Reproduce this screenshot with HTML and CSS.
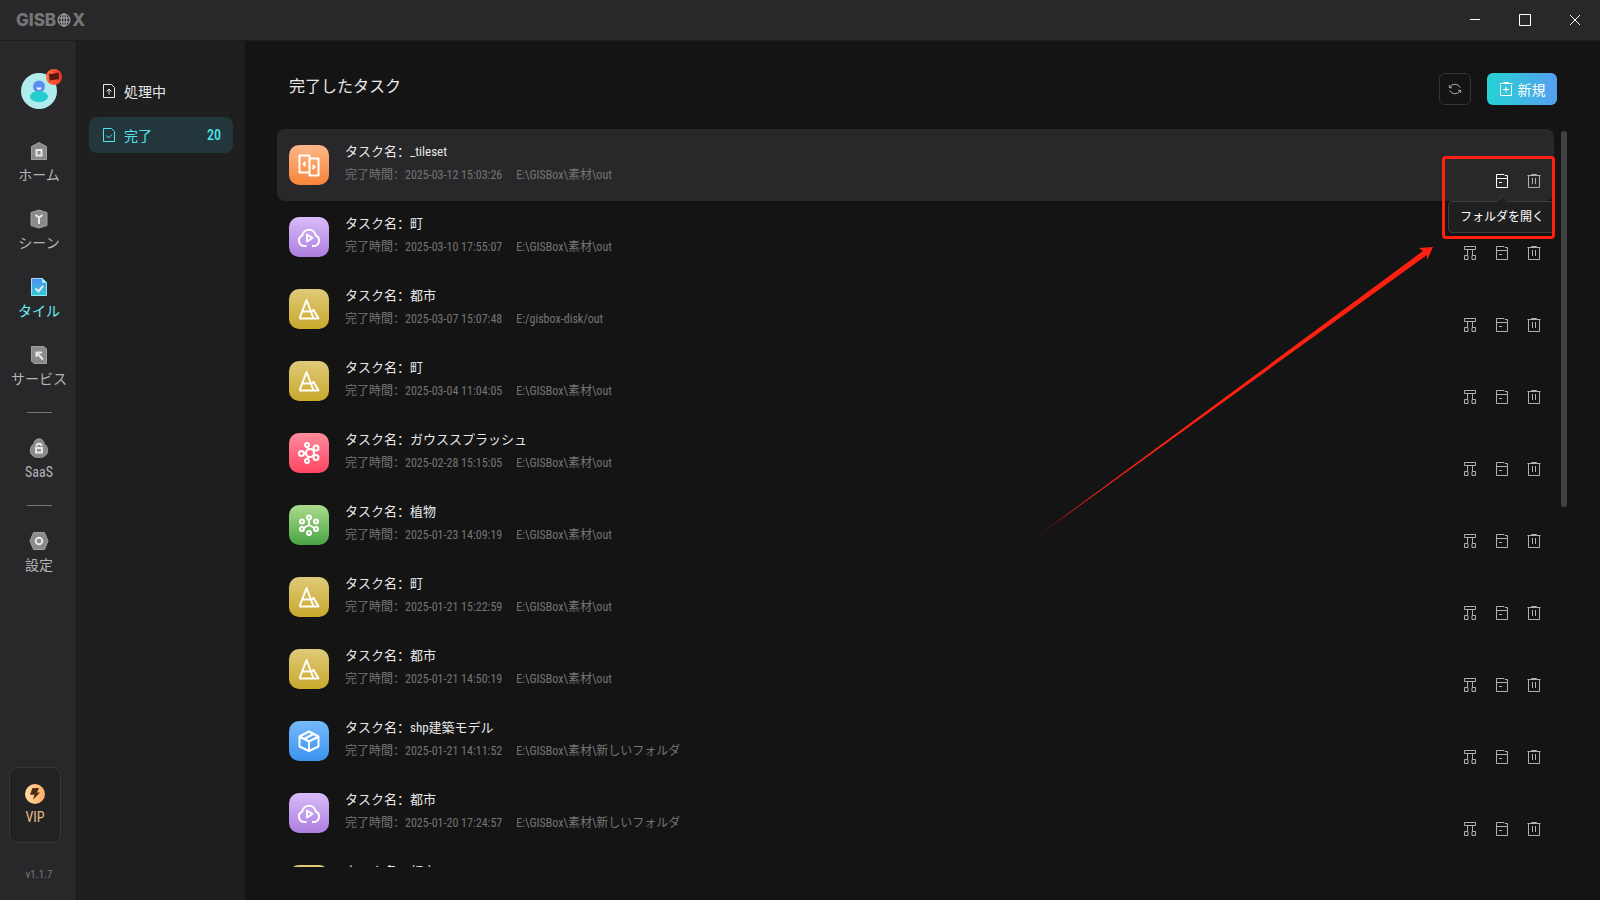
FILE: index.html
```
<!DOCTYPE html>
<html lang="zh-CN">
<head>
    <meta charset="UTF-8">
    <meta name="viewport" content="width=device-width, initial-scale=1.0">
    <title>GISBox - 完了したタスク</title>
    <link rel="stylesheet" href="styles.css">
</head>
<body>
    <!-- アイコン定義 -->
    <svg class="sprite" aria-hidden="true">
        <symbol id="i-tree" viewBox="0 0 14 16"><path d="M1.5 1.5h11v3h-11zM4.5 5v5M9.5 5v5M1.5 10.500h3.500v4h-3.500zM9 10.500h3.500v4h-3.500z"/></symbol>
        <symbol id="i-folder" viewBox="0 0 14 16"><path d="M1.500 14.500v-13h7.500l1 1h2.500v12zM1.500 5.500h11M4 9.500h3"/></symbol>
        <symbol id="i-trash" viewBox="0 0 14 16"><path d="M.5 2.500h13M4 2.500l.5-1h5l.5 1M1.500 3v11.500h11V3M5.500 5v6M8.500 5v6"/></symbol>
        <symbol id="i-tileset" viewBox="0 0 24 24"><path d="M2.500 2.500h10v17h-10zM12.500 5.500h9v17h-9zM8.500 9L6.500 11l2 2M15.500 12l2 2-2 2"/></symbol>
        <symbol id="i-cloud" viewBox="0 0 24 24"><path d="M9.500 21H7a5.500 5.500 0 0 1-1.800-10.500 6.900 6.900 0 0 1 13.600 0A5.500 5.500 0 0 1 17 21h-2M10 9.500v7l5.500-3.500z"/></symbol>
        <symbol id="i-terrain" viewBox="0 0 24 24"><path d="M2.500 21.500L9.500 3l7 18.500M6 14.500h7.500M2.500 21.500h19L16.500 13l-2.500 2"/></symbol>
        <symbol id="i-splat" viewBox="0 0 24 24"><circle cx="13" cy="12" r="4"/><circle cx="10" cy="4" r="2"/><circle cx="19" cy="7" r="2.500"/><circle cx="4.500" cy="12.500" r="2.500"/><circle cx="19" cy="16.500" r="2.500"/><circle cx="10" cy="20" r="2"/><path d="M10.500 6l1 2.300M7 12.500h2M11.500 15.800L10.500 18"/></symbol>
        <symbol id="i-point" viewBox="0 0 24 24"><circle cx="12" cy="4.500" r="2"/><circle cx="5" cy="8.500" r="2"/><circle cx="19" cy="8.500" r="2"/><circle cx="5" cy="16" r="2"/><circle cx="19" cy="16" r="2"/><circle cx="12" cy="20" r="2"/><path d="M12 6.500V12l-5.300 3M12 12l5.300 3"/></symbol>
        <symbol id="i-box" viewBox="0 0 24 24"><path d="M12 2.500l9.500 5v10L12 22l-9.500-4.500v-10zM2.500 7.500L12 12.500l9.500-5M12 12.500V22M7 10l9.500-5"/></symbol>
    </svg>

    <header class="titlebar">
        <div class="logo">GISB<svg viewBox="0 0 14 14" aria-label="O"><circle cx="7" cy="7" r="6"/><ellipse cx="7" cy="7" rx="2.800" ry="6"/><path d="M1.500 5h11M1.500 9h11M7 1v12"/></svg>X</div>
        <div class="window-buttons">
            <button aria-label="最小化"><svg viewBox="0 0 12 12"><path d="M1 5.500h10"/></svg></button>
            <button aria-label="最大化"><svg viewBox="0 0 12 12"><path d="M.5.5h11v11H.5z"/></svg></button>
            <button aria-label="閉じる"><svg viewBox="0 0 12 12"><path d="M1 1l10 10M11 1L1 11"/></svg></button>
        </div>
    </header>

    <div class="app">
        <nav class="sidebar">
            <button class="avatar" aria-label="アカウント">
                <svg viewBox="0 0 36 36"><circle cx="18" cy="18" r="18" fill="#b1ecec"/><circle cx="18" cy="13.500" r="6" fill="#5b8df3"/><ellipse cx="18" cy="23.500" rx="9" ry="5.500" fill="#26cdce"/><path d="M15.500 14.500h5a2.500 2.500 0 0 1-5 0z" fill="#fff"/></svg>
                <svg class="flag" viewBox="0 0 16 16"><defs><linearGradient id="g-flag"><stop stop-color="#ff7247"/><stop offset="1" stop-color="#f8341f"/></linearGradient></defs><circle cx="8" cy="8" r="8" fill="url(#g-flag)"/><path d="M3 4.500q2.500 1 5 0t5-.5v6.500q-2.500-.5-4.500.3t-4.500.2l.5 2h-.8z" fill="#541b12"/></svg>
            </button>
            <a class="nav-item" href="#">
                <svg viewBox="0 0 20 20"><path class="solid" d="M2.500 5.500L10 1.500l7.500 4v13h-15z"/><path class="mark" d="M7.500 9h5v5.500h-5z"/></svg>
                ホーム
            </a>
            <a class="nav-item" href="#">
                <svg viewBox="0 0 20 20"><path class="solid" d="M10 1l8 2.500v13L10 19l-8-2.500v-13z"/><path class="mark" d="M6.500 6L10 8.500 13.500 6M10 8.500V15"/></svg>
                シーン
            </a>
            <a class="nav-item active" href="#">
                <svg viewBox="0 0 20 20"><defs><linearGradient id="g-tile" x2="0" y2="1"><stop stop-color="#558bf0"/><stop offset="1" stop-color="#2bd0d8"/></linearGradient></defs><path d="M2.500 1.500h11l4 4v13h-15z" fill="url(#g-tile)" stroke="#a0e0f5"/><path d="M13.500 1.500v4h4z" fill="#dff7fb"/><path class="mark" d="M6.500 11.500l3 3 4.500-5.500"/></svg>
                タイル
            </a>
            <a class="nav-item" href="#">
                <svg viewBox="0 0 20 20"><path class="solid" d="M2.500 1.500h12.500l2.500 2.500v14.500H5l-2.500-2.500z"/><path class="mark" d="M7.500 12V7.500H13M7.500 7.500L14 14.500"/></svg>
                サービス
            </a>
            <hr>
            <a class="nav-item" href="#">
                <svg viewBox="0 0 20 20"><path class="solid" d="M10 .8c3 0 4.800 2.200 5.200 5 2 1.500 3.500 3.700 3.500 6.500 0 4-3 7-7 7H8.300c-4 0-7-3-7-7 0-2.800 1.500-5 3.500-6.500.4-2.800 2.200-5 5.200-5z"/><path class="mark" d="M7 10h6v4.500H7zM7.500 8.500a2.500 2.500 0 0 1 5-.5"/></svg>
                SaaS
            </a>
            <hr>
            <a class="nav-item" href="#">
                <svg viewBox="0 0 20 20"><path class="solid" d="M4.500 1.500h11l3.500 8.500-3.500 8.500h-11L1 10z"/><circle class="mark" cx="10" cy="10" r="3.300"/></svg>
                設定
            </a>
            <button class="vip">
                <svg viewBox="0 0 20 20"><defs><linearGradient id="g-vip"><stop stop-color="#ffdca2"/><stop offset="1" stop-color="#ffac66"/></linearGradient></defs><circle cx="10" cy="10" r="10" fill="url(#g-vip)"/><path d="M7.500 4h6.500l-2 4.500h3L8 15.800l1.500-5H5z" fill="#4b2c10"/></svg>
                VIP
            </button>
            <span class="version">v1.1.7</span>
        </nav>

        <nav class="submenu">
            <a class="submenu-item" href="#">
                <svg viewBox="0 0 14 16"><path d="M1.500 1.500h8l3 3v10h-11zM7 11.500v-5M4.500 8.500L7 6l2.500 2.500"/></svg>
                処理中
            </a>
            <a class="submenu-item active" href="#">
                <svg viewBox="0 0 14 16"><path d="M1.500 1.500h8l3 3v10h-11zM4.500 8.500l2 2.500 3.500-3.500"/></svg>
                完了
                <span class="count">20</span>
            </a>
        </nav>

        <main class="content">
            <div class="content-head">
                <h1>完了したタスク</h1>
                <button class="refresh" aria-label="更新"><svg viewBox="0 0 16 16"><path d="M2 6.500a6.500 6.500 0 0 1 12 0M14 9.500a6.500 6.500 0 0 1-12 0M1.500 3.500v3h3M14.500 12.500v-3h-3"/></svg></button>
                <button class="create"><svg viewBox="0 0 14 16"><path d="M.5 2.500h13M4 2.500l.5-1h5l.5 1M1.500 4v10.500h11V4M7 5.500v6M4 8.500h6"/></svg>新規</button>
            </div>

            <div class="list-area">
                <ul class="task-list">
                    <li class="task hover">
                        <svg class="type orange"><use href="#i-tileset"/></svg>
                        <div class="info">
                            <p class="name">タスク名：_tileset</p>
                            <p class="meta"><span>完了時間：2025-03-12 15:03:26</span><span>E:\GISBox\素材\out</span></p>
                        </div>
                        <div class="actions">
                            <button class="current" aria-label="フォルダを開く"><svg><use href="#i-folder"/></svg><span class="tooltip">フォルダを開く</span></button>
                            <button aria-label="削除"><svg><use href="#i-trash"/></svg></button>
                        </div>
                    </li>
                    <li class="task">
                        <svg class="type purple"><use href="#i-cloud"/></svg>
                        <div class="info">
                            <p class="name">タスク名：町</p>
                            <p class="meta"><span>完了時間：2025-03-10 17:55:07</span><span>E:\GISBox\素材\out</span></p>
                        </div>
                        <div class="actions">
                            <button aria-label="階層"><svg><use href="#i-tree"/></svg></button>
                            <button aria-label="フォルダを開く"><svg><use href="#i-folder"/></svg></button>
                            <button aria-label="削除"><svg><use href="#i-trash"/></svg></button>
                        </div>
                    </li>
                    <li class="task">
                        <svg class="type gold"><use href="#i-terrain"/></svg>
                        <div class="info">
                            <p class="name">タスク名：都市</p>
                            <p class="meta"><span>完了時間：2025-03-07 15:07:48</span><span>E:/gisbox-disk/out</span></p>
                        </div>
                        <div class="actions">
                            <button aria-label="階層"><svg><use href="#i-tree"/></svg></button>
                            <button aria-label="フォルダを開く"><svg><use href="#i-folder"/></svg></button>
                            <button aria-label="削除"><svg><use href="#i-trash"/></svg></button>
                        </div>
                    </li>
                    <li class="task">
                        <svg class="type gold"><use href="#i-terrain"/></svg>
                        <div class="info">
                            <p class="name">タスク名：町</p>
                            <p class="meta"><span>完了時間：2025-03-04 11:04:05</span><span>E:\GISBox\素材\out</span></p>
                        </div>
                        <div class="actions">
                            <button aria-label="階層"><svg><use href="#i-tree"/></svg></button>
                            <button aria-label="フォルダを開く"><svg><use href="#i-folder"/></svg></button>
                            <button aria-label="削除"><svg><use href="#i-trash"/></svg></button>
                        </div>
                    </li>
                    <li class="task">
                        <svg class="type red"><use href="#i-splat"/></svg>
                        <div class="info">
                            <p class="name">タスク名：ガウススプラッシュ</p>
                            <p class="meta"><span>完了時間：2025-02-28 15:15:05</span><span>E:\GISBox\素材\out</span></p>
                        </div>
                        <div class="actions">
                            <button aria-label="階層"><svg><use href="#i-tree"/></svg></button>
                            <button aria-label="フォルダを開く"><svg><use href="#i-folder"/></svg></button>
                            <button aria-label="削除"><svg><use href="#i-trash"/></svg></button>
                        </div>
                    </li>
                    <li class="task">
                        <svg class="type green"><use href="#i-point"/></svg>
                        <div class="info">
                            <p class="name">タスク名：植物</p>
                            <p class="meta"><span>完了時間：2025-01-23 14:09:19</span><span>E:\GISBox\素材\out</span></p>
                        </div>
                        <div class="actions">
                            <button aria-label="階層"><svg><use href="#i-tree"/></svg></button>
                            <button aria-label="フォルダを開く"><svg><use href="#i-folder"/></svg></button>
                            <button aria-label="削除"><svg><use href="#i-trash"/></svg></button>
                        </div>
                    </li>
                    <li class="task">
                        <svg class="type gold"><use href="#i-terrain"/></svg>
                        <div class="info">
                            <p class="name">タスク名：町</p>
                            <p class="meta"><span>完了時間：2025-01-21 15:22:59</span><span>E:\GISBox\素材\out</span></p>
                        </div>
                        <div class="actions">
                            <button aria-label="階層"><svg><use href="#i-tree"/></svg></button>
                            <button aria-label="フォルダを開く"><svg><use href="#i-folder"/></svg></button>
                            <button aria-label="削除"><svg><use href="#i-trash"/></svg></button>
                        </div>
                    </li>
                    <li class="task">
                        <svg class="type gold"><use href="#i-terrain"/></svg>
                        <div class="info">
                            <p class="name">タスク名：都市</p>
                            <p class="meta"><span>完了時間：2025-01-21 14:50:19</span><span>E:\GISBox\素材\out</span></p>
                        </div>
                        <div class="actions">
                            <button aria-label="階層"><svg><use href="#i-tree"/></svg></button>
                            <button aria-label="フォルダを開く"><svg><use href="#i-folder"/></svg></button>
                            <button aria-label="削除"><svg><use href="#i-trash"/></svg></button>
                        </div>
                    </li>
                    <li class="task">
                        <svg class="type blue"><use href="#i-box"/></svg>
                        <div class="info">
                            <p class="name">タスク名：shp建築モデル</p>
                            <p class="meta"><span>完了時間：2025-01-21 14:11:52</span><span>E:\GISBox\素材\新しいフォルダ</span></p>
                        </div>
                        <div class="actions">
                            <button aria-label="階層"><svg><use href="#i-tree"/></svg></button>
                            <button aria-label="フォルダを開く"><svg><use href="#i-folder"/></svg></button>
                            <button aria-label="削除"><svg><use href="#i-trash"/></svg></button>
                        </div>
                    </li>
                    <li class="task">
                        <svg class="type purple"><use href="#i-cloud"/></svg>
                        <div class="info">
                            <p class="name">タスク名：都市</p>
                            <p class="meta"><span>完了時間：2025-01-20 17:24:57</span><span>E:\GISBox\素材\新しいフォルダ</span></p>
                        </div>
                        <div class="actions">
                            <button aria-label="階層"><svg><use href="#i-tree"/></svg></button>
                            <button aria-label="フォルダを開く"><svg><use href="#i-folder"/></svg></button>
                            <button aria-label="削除"><svg><use href="#i-trash"/></svg></button>
                        </div>
                    </li>
                    <li class="task">
                        <svg class="type gold"><use href="#i-terrain"/></svg>
                        <div class="info">
                            <p class="name">タスク名：都市</p>
                        </div>
                    </li>
                </ul>
                <div class="scrollbar"></div>
            </div>

            <!-- 説明用の赤枠と矢印 -->
            <div class="highlight"></div>
            <svg class="arrow" viewBox="0 0 406 297">
                <defs><linearGradient id="g-arrow" x1="0" y1="1" x2="1" y2="0"><stop stop-color="#ff2010" stop-opacity=".2"/><stop offset=".1" stop-color="#ff2010"/></linearGradient></defs>
                <path d="M0 297L395 5 391 2 405 1 399 14 399 9z" fill="url(#g-arrow)"/>
            </svg>
        </main>
    </div>
</body>
</html>
```
FILE: styles.css
```
* {
    box-sizing: border-box;
}
body {
    margin: 0;
    height: 100vh;
    display: flex;
    flex-direction: column;
    overflow: hidden;
    background: #141414;
    color: #e8e8e8;
    font-family: "Roboto Condensed", Roboto, "Noto Sans CJK SC", sans-serif;
    font-size: 14px;
}
button {
    padding: 0;
    border: none;
    background: none;
    color: inherit;
    font: inherit;
    cursor: pointer;
}
a {
    color: inherit;
    text-decoration: none;
}
svg {
    flex: none;
    fill: none;
    stroke: currentColor;
}
.sprite {
    display: none;
}

/* タイトルバー */
.titlebar {
    flex: none;
    display: flex;
    align-items: center;
    justify-content: space-between;
    height: 41px;
    padding-left: 16px;
    background: #28282a;
    border-bottom: 1px solid #1c1c1d;
}
.logo {
    display: flex;
    align-items: center;
    color: #767677;
    font-family: Inter, sans-serif;
    font-size: 17px;
    font-weight: 800;
}
.logo svg {
    width: 14px;
    height: 14px;
    margin: 0 1px;
    stroke: #b4b4b4;
}
.window-buttons {
    display: flex;
    color: #fff;
}
.window-buttons button {
    display: flex;
    align-items: center;
    justify-content: center;
    width: 50px;
    height: 40px;
}
.window-buttons svg {
    width: 12px;
    height: 12px;
}

.app {
    flex: 1;
    display: flex;
    min-height: 0;
}

/* サイドバー */
.sidebar {
    flex: none;
    display: flex;
    flex-direction: column;
    align-items: center;
    width: 77px;
    padding: 32px 0 15px 2px;
    background: #28282a;
    border-right: 1px solid #151515;
}
.avatar {
    position: relative;
    width: 36px;
    height: 36px;
    margin-bottom: 23px;
}
.avatar svg {
    display: block;
    stroke: none;
}
.avatar .flag {
    position: absolute;
    top: -4px;
    right: -5px;
    width: 16px;
    height: 16px;
}
.nav-item {
    flex: none;
    display: flex;
    flex-direction: column;
    align-items: center;
    gap: 4px;
    height: 68px;
    padding-top: 9px;
    color: #b4b4b5;
    line-height: 20px;
}
.nav-item svg {
    width: 20px;
    height: 20px;
}
.nav-item.active {
    color: #6df0f5;
}
.solid {
    fill: #8a8a8b;
    stroke: #a0a0a1;
}
.mark {
    stroke: #e8e8e8;
    stroke-width: 2;
}
.sidebar hr {
    width: 25px;
    height: 1px;
    margin: 8px 0 16px;
    border: none;
    background: #777;
}
.vip {
    display: flex;
    flex-direction: column;
    align-items: center;
    justify-content: center;
    gap: 4px;
    width: 52px;
    height: 76px;
    margin: auto 8px 22px 0;
    border: 1px solid #40352e;
    border-radius: 8px;
    background: #222223;
    color: #e7bd8a;
    line-height: 18px;
}
.vip svg {
    width: 20px;
    height: 20px;
    stroke: none;
}
.version {
    color: #77777a;
    font-size: 11px;
    line-height: 20px;
}

/* サブメニュー */
.submenu {
    flex: none;
    display: flex;
    flex-direction: column;
    gap: 8px;
    width: 168px;
    padding: 32px 12px;
    background: #1f1f1f;
}
.submenu-item {
    display: flex;
    align-items: center;
    gap: 8px;
    height: 36px;
    padding: 0 12px 1px 13px;
    border-radius: 8px;
}
.submenu-item svg {
    width: 14px;
    height: 16px;
}
.submenu-item.active {
    background: #22363c;
    color: #4fe6ee;
}
.count {
    margin-left: auto;
    font-weight: 500;
}

/* メイン */
.content {
    position: relative;
    flex: 1;
    display: flex;
    flex-direction: column;
    min-width: 0;
    padding: 32px 33px 33px 32px;
}
.content-head {
    display: flex;
    align-items: center;
    gap: 16px;
    padding: 0 10px 0 12px;
}
.content-head h1 {
    margin: 0 auto 0 0;
    padding-bottom: 4px;
    font-size: 16px;
    font-weight: normal;
    line-height: 24px;
}
.refresh,
.create {
    display: flex;
    align-items: center;
    justify-content: center;
    height: 32px;
    border-radius: 6px;
}
.refresh {
    width: 32px;
    border: 1px solid #353536;
    color: #bbb;
}
.refresh svg {
    width: 14px;
    height: 14px;
}
.create {
    gap: 5px;
    width: 70px;
    padding-bottom: 1px;
    background: linear-gradient(to right, #25d2d4, #559ff0);
    color: #fff;
}
.create svg {
    width: 14px;
    height: 16px;
}

.list-area {
    flex: 1;
    display: flex;
    gap: 7px;
    min-height: 0;
    margin-top: 24px;
}
.task-list {
    flex: 1;
    margin: 0;
    padding: 0;
    overflow: hidden;
    list-style: none;
}
.scrollbar {
    width: 6px;
    height: 51%;
    margin-top: 2px;
    border-radius: 3px;
    background: #424244;
}
.task {
    display: flex;
    gap: 16px;
    height: 72px;
    padding: 16px 12px;
    border-radius: 8px;
}
.task.hover {
    background: #28282a;
}
.type {
    width: 40px;
    height: 40px;
    padding: 8px;
    border-radius: 10px;
    color: #fff;
    stroke-width: 2;
    stroke-linejoin: round;
}
.orange { background: linear-gradient(#fdb78a, #f78538); }
.purple { background: linear-gradient(#d9bbf9, #ad7ee0); }
.gold { background: linear-gradient(#dfca78, #c8a92c); }
.red { background: linear-gradient(#ff8b9c, #ff4563); }
.green { background: linear-gradient(#acdc8c, #49a345); }
.blue { background: linear-gradient(#76b9fd, #3b93ef); }
.info {
    flex: 1;
}
.name,
.meta {
    margin: 0;
    line-height: 20px;
}
.name {
    margin-top: -3px;
    font-size: 13px;
}
.meta {
    display: flex;
    gap: 14px;
    margin-top: 3px;
    color: #747474;
    font-size: 12px;
}
.actions {
    display: flex;
    align-items: flex-end;
    gap: 16px;
    color: #b0b0b0;
}
.actions button {
    position: relative;
    width: 16px;
    height: 16px;
    margin-bottom: -4px;
}
.actions svg {
    display: block;
    width: 14px;
    height: 16px;
    margin: 0 auto;
}
.actions .current {
    color: #fff;
}

/* ツールチップ */
.tooltip {
    position: absolute;
    z-index: 1;
    top: 28px;
    left: 50%;
    transform: translateX(-50%);
    padding: 5px 11px;
    border: 1px solid #3c3c3e;
    border-radius: 4px;
    background: #1f1f20;
    font-size: 12px;
    line-height: 20px;
    white-space: nowrap;
}
.tooltip::before {
    content: "";
    position: absolute;
    top: -5px;
    left: 50%;
    width: 8px;
    height: 8px;
    margin-left: -4px;
    border: 1px solid #3c3c3e;
    border-width: 1px 0 0 1px;
    background: #1f1f20;
    transform: rotate(45deg);
}

.highlight {
    position: absolute;
    z-index: 2;
    top: 115px;
    right: 45px;
    width: 113px;
    height: 83px;
    border: 3px solid #ff2010;
    border-radius: 4px;
}
.arrow {
    position: absolute;
    top: 205px;
    right: 166px;
    width: 406px;
    height: 297px;
    stroke: none;
}
```
